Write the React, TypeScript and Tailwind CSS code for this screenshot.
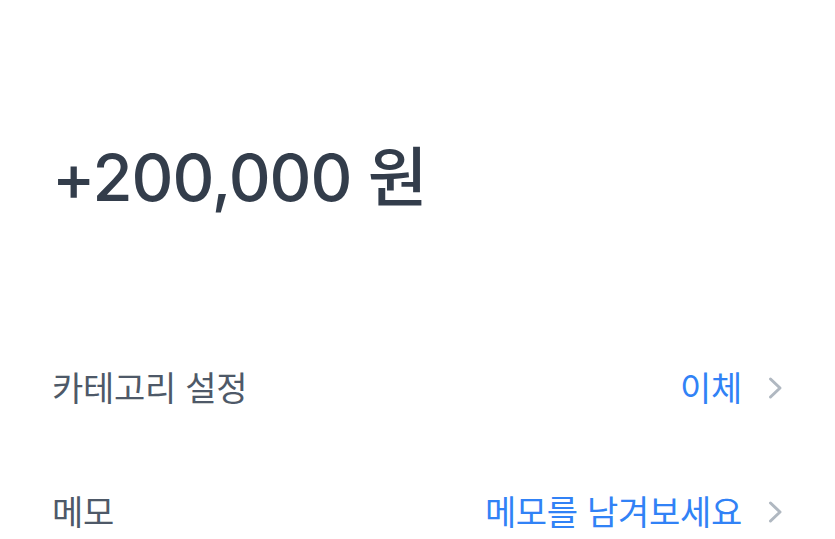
const font = { fontFamily: 'Inter, "Noto Sans CJK KR", sans-serif' };

const Chevron = () => (
  <svg width="16" height="24" viewBox="0 0 16 24" fill="none" className="text-[#b0b8c1]">
    <polyline points="3.5,3 13,12 3.5,21" stroke="currentColor" strokeWidth="3" strokeLinecap="round" strokeLinejoin="round" />
  </svg>
);

const Row = ({ label, value }: { label: string; value: string }) => (
  <div className="flex items-center justify-between h-[124px]">
    <span className="text-[34px] text-[#4e5968] tracking-[-0.3px]">{label}</span>
    <div className="flex items-center gap-[25px]">
      <span className="text-[34px] text-[#3182f6] tracking-[-0.3px]">{value}</span>
      <Chevron />
    </div>
  </div>
);

export default function App() {
  return (
    <div className="w-[835px] h-[539px] bg-white overflow-hidden pl-[52px] pr-[52px]" style={font}>
      <div className="pt-[145px] h-[326px]">
        <h1 className="text-[65px] font-medium text-[#333d4b] leading-none tracking-[-1px]">+200,000 원</h1>
      </div>
      <Row label="카테고리 설정" value="이체" />
      <Row label="메모" value="메모를 남겨보세요" />
    </div>
  );
}
